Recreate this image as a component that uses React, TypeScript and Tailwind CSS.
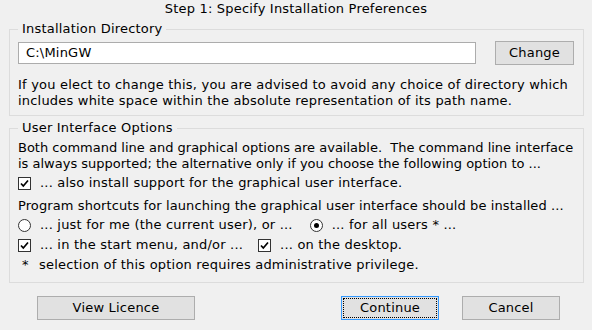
import React from "react";

function CheckBox() {
  return (
    <span className="inline-flex items-center justify-center w-[13px] h-[13px] border border-[#333333] bg-white shrink-0">
      <svg width="11" height="11" viewBox="0 0 11 11">
        <path d="M2 5.5 L4.3 8 L9 2.5" fill="none" stroke="#000" strokeWidth="1.7" />
      </svg>
    </span>
  );
}

function Radio({ checked }: { checked?: boolean }) {
  return (
    <span className="inline-flex items-center justify-center w-[13px] h-[13px] rounded-full border border-[#333333] bg-white shrink-0">
      {checked && <span className="w-[5px] h-[5px] rounded-full bg-black" />}
    </span>
  );
}

export default function App() {
  return (
    <div
      className="w-[592px] h-[330px] bg-[#f0f0f0] text-black text-[13px] tracking-[0.2px] leading-[16px] overflow-hidden whitespace-nowrap"
      style={{ fontFamily: '"DejaVu Sans", Verdana, sans-serif' }}
    >
      <div className="pt-[1px] text-center h-[21px]">Step 1: Specify Installation Preferences</div>

      <fieldset className="ml-[9px] mr-[8px] border border-[#dcdcdc] px-[8px] pb-[6px] min-w-0">
        <legend className="px-[4px]">Installation Directory</legend>
        <div className="flex items-center mt-[4px]">
          <div className="w-[458px] h-[22px] border border-[#acacac] bg-white pl-[7px] flex items-center">
            C:\MinGW
          </div>
          <div className="ml-[19px] w-[79px] h-[24px] border border-[#adadad] bg-[#e1e1e1] flex items-center justify-center">
            Change
          </div>
        </div>
        <p className="mt-[12px]">
          If you elect to change this, you are advised to avoid any choice of directory which
          <br />
          includes white space within the absolute representation of its path name.
        </p>
      </fieldset>

      <fieldset className="mt-[4px] ml-[9px] mr-[8px] border border-[#dcdcdc] px-[8px] pb-[7px] min-w-0">
        <legend className="px-[4px]">User Interface Options</legend>
        <p className="mt-[4px] tracking-[0px]">
          Both command line and graphical options are available.&nbsp; The command line interface
          <br />
          is always supported; the alternative only if you choose the following option to ...
        </p>
        <div className="flex items-center h-[18px] mt-[2px]">
          <CheckBox />
          <span className="ml-[9px]">... also install support for the graphical user interface.</span>
        </div>
        <p className="mt-[6px] tracking-[0.1px]">
          Program shortcuts for launching the graphical user interface should be installed ...
        </p>
        <div className="flex items-center h-[20px] mt-[1px]">
          <Radio />
          <span className="ml-[9px]">... just for me (the current user), or ...</span>
          <span className="ml-[17px] flex">
            <Radio checked />
          </span>
          <span className="ml-[9px]">... for all users * ...</span>
        </div>
        <div className="flex items-center h-[20px]">
          <CheckBox />
          <span className="ml-[9px]">... in the start menu, and/or ...</span>
          <span className="ml-[15px] flex">
            <CheckBox />
          </span>
          <span className="ml-[9px]">... on the desktop.</span>
        </div>
        <div className="flex items-center h-[20px]">
          <span className="ml-[4px] w-[17px]">*</span>
          <span>selection of this option requires administrative privilege.</span>
        </div>
      </fieldset>

      <div className="flex mt-[13px]">
        <div className="ml-[37px] w-[158px] h-[24px] border border-[#adadad] bg-[#e1e1e1] flex items-center justify-center">
          View Licence
        </div>
        <div className="ml-[146px] w-[98px] h-[24px] border border-[#3399ff] bg-[#e1e1e1] p-[1px]">
          <div className="w-full h-full border border-dotted border-black flex items-center justify-center">
            Continue
          </div>
        </div>
        <div className="ml-[23px] w-[98px] h-[24px] border border-[#adadad] bg-[#e1e1e1] flex items-center justify-center">
          Cancel
        </div>
      </div>
    </div>
  );
}
